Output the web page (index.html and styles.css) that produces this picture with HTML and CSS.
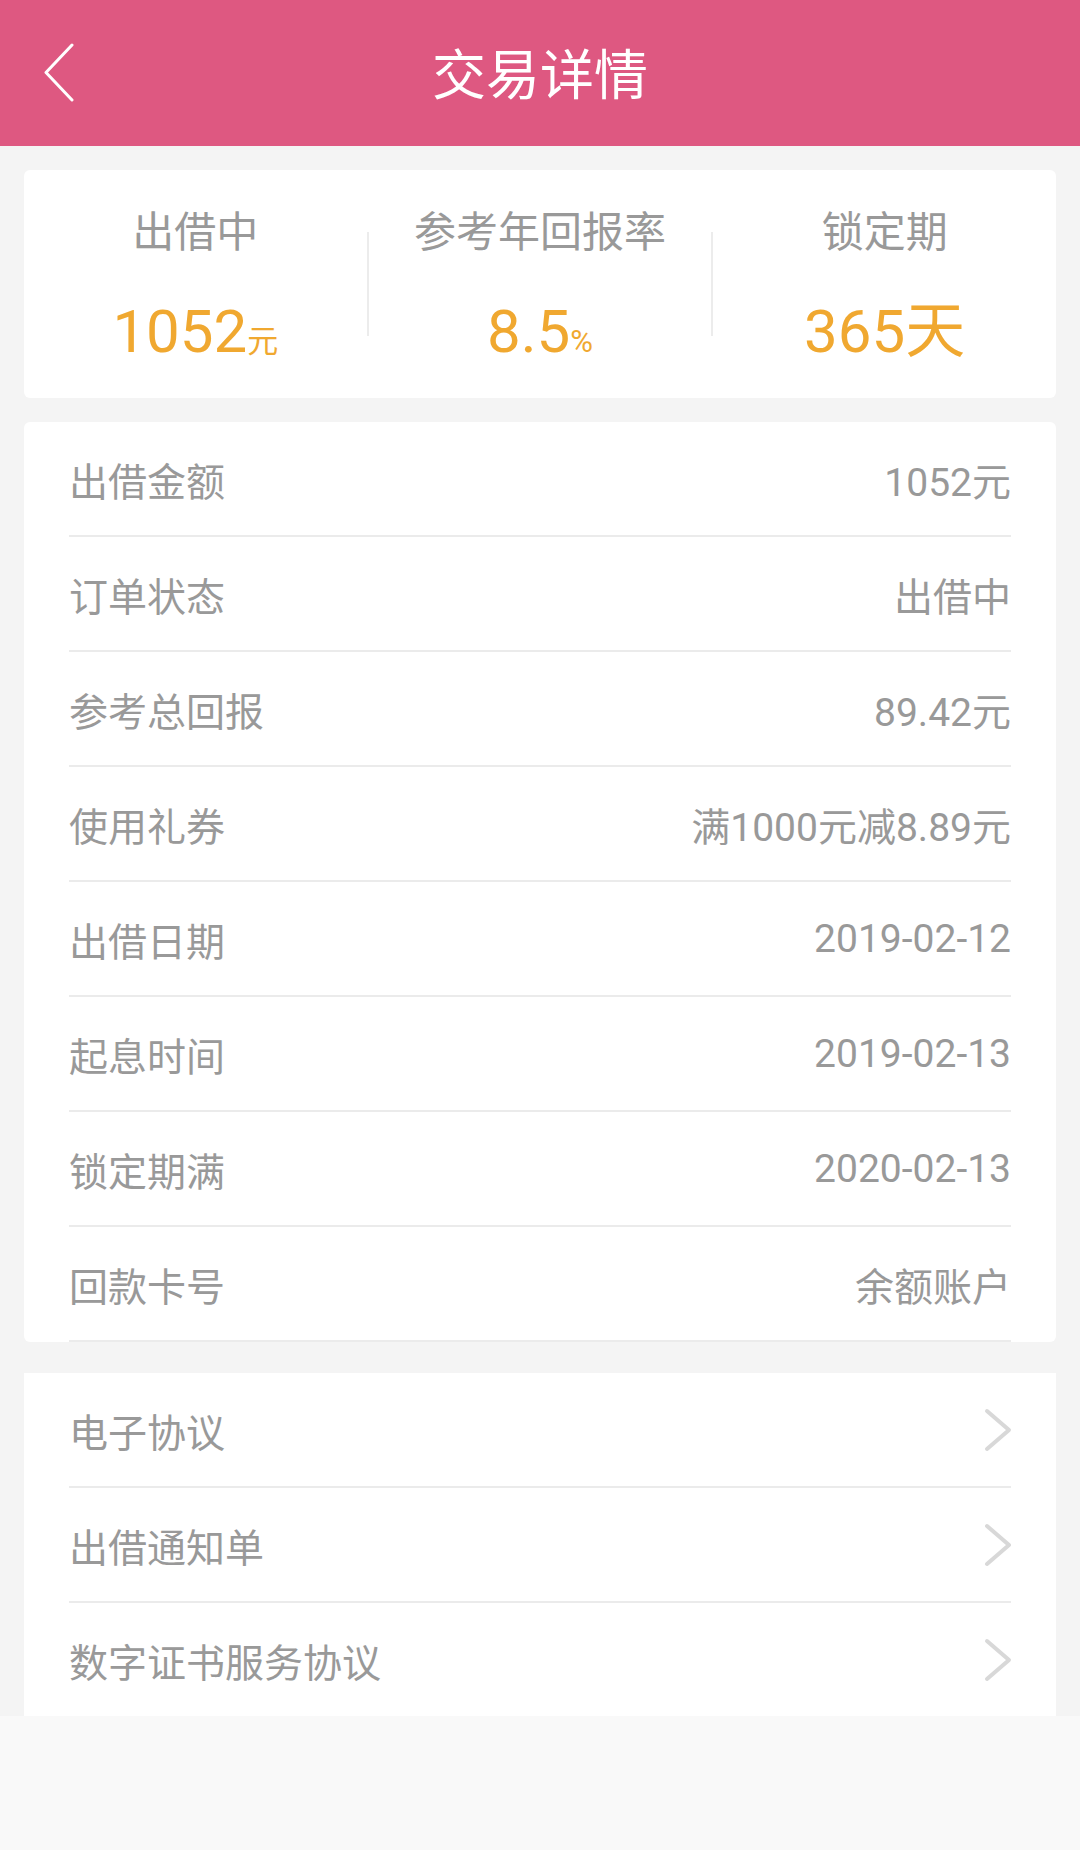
FILE: index.html
```html
<!DOCTYPE html>
<html lang="zh-CN">
<head>
    <meta charset="UTF-8">
    <meta name="viewport" content="width=device-width, initial-scale=1.0">
    <title>交易详情</title>
    <link rel="stylesheet" href="styles.css">
</head>
<body>
    <header class="topbar">
        <div class="back">
            <svg width="32" height="60" viewBox="0 0 32 60">
                <path d="M29 2 L3 29.5 L29 57" fill="none" stroke="#fff" stroke-width="3" stroke-linecap="round" stroke-linejoin="round"/>
            </svg>
        </div>
        <h1 class="title">交易详情</h1>
        <div></div>
    </header>

    <main class="page">
        <section class="card summary">
            <div class="stat">
                <div class="stat-label">出借中</div>
                <div class="stat-value">1052<small>元</small></div>
            </div>
            <div class="sep"></div>
            <div class="stat">
                <div class="stat-label">参考年回报率</div>
                <div class="stat-value">8.5<small>%</small></div>
            </div>
            <div class="sep"></div>
            <div class="stat">
                <div class="stat-label">锁定期</div>
                <div class="stat-value">365天</div>
            </div>
        </section>

        <section class="card details">
            <div class="row"><span>出借金额</span><span>1052元</span></div>
            <div class="row"><span>订单状态</span><span>出借中</span></div>
            <div class="row"><span>参考总回报</span><span>89.42元</span></div>
            <div class="row"><span>使用礼券</span><span>满1000元减8.89元</span></div>
            <div class="row"><span>出借日期</span><span>2019-02-12</span></div>
            <div class="row"><span>起息时间</span><span>2019-02-13</span></div>
            <div class="row"><span>锁定期满</span><span>2020-02-13</span></div>
            <div class="row"><span>回款卡号</span><span>余额账户</span></div>
        </section>

        <section class="card links">
            <div class="row">
                <span>电子协议</span>
                <svg class="arrow" width="30" height="46" viewBox="0 0 30 46"><path d="M4 4 L26 23 L4 42" fill="none" stroke="#d8d8d8" stroke-width="4" stroke-linecap="round" stroke-linejoin="round"/></svg>
            </div>
            <div class="row">
                <span>出借通知单</span>
                <svg class="arrow" width="30" height="46" viewBox="0 0 30 46"><path d="M4 4 L26 23 L4 42" fill="none" stroke="#d8d8d8" stroke-width="4" stroke-linecap="round" stroke-linejoin="round"/></svg>
            </div>
            <div class="row">
                <span>数字证书服务协议</span>
                <svg class="arrow" width="30" height="46" viewBox="0 0 30 46"><path d="M4 4 L26 23 L4 42" fill="none" stroke="#d8d8d8" stroke-width="4" stroke-linecap="round" stroke-linejoin="round"/></svg>
            </div>
        </section>
    </main>
</body>
</html>
```

FILE: styles.css
```css
body {
    margin: 0;
    background: #f9f9f9;
    font-family: Roboto, "Noto Sans CJK SC", sans-serif;
    color: #999;
}
.topbar {
    height: 146px;
    background: #de5881;
    display: grid;
    grid-template-columns: 1fr auto 1fr;
    align-items: center;
}
.back {
    padding-left: 43px;
    display: flex;
    align-items: center;
}
.title {
    margin: 0;
    padding-top: 8px;
    font-size: 54px;
    font-weight: normal;
    line-height: 1;
    color: #fff;
}
.page {
    background: #f4f4f4;
    padding: 24px 24px 0;
}
.card {
    background: #fff;
    border-radius: 6px;
}
.summary {
    height: 228px;
    display: flex;
    align-items: center;
}
.stat {
    flex: 1;
    display: flex;
    flex-direction: column;
    align-items: center;
    align-self: stretch;
    padding-top: 35px;
    box-sizing: border-box;
}
.stat-label {
    font-size: 42px;
    line-height: 56px;
    height: 56px;
}
.stat-value {
    margin-top: 35px;
    font-size: 60px;
    line-height: 72px;
    height: 72px;
    color: #f0a830;
}
.stat-value small {
    font-size: 31px;
}
.sep {
    width: 2px;
    height: 104px;
    background: #ececec;
}
.details {
    margin-top: 24px;
}
.row {
    margin: 0 45px;
    height: 113px;
    border-bottom: 2px solid #ebebeb;
    display: flex;
    justify-content: space-between;
    align-items: center;
    font-size: 39px;
}
.links {
    margin-top: 31px;
    border-radius: 0;
}
.links .row:last-child {
    border-bottom: none;
}
.arrow {
    margin-right: -2px;
}
```
